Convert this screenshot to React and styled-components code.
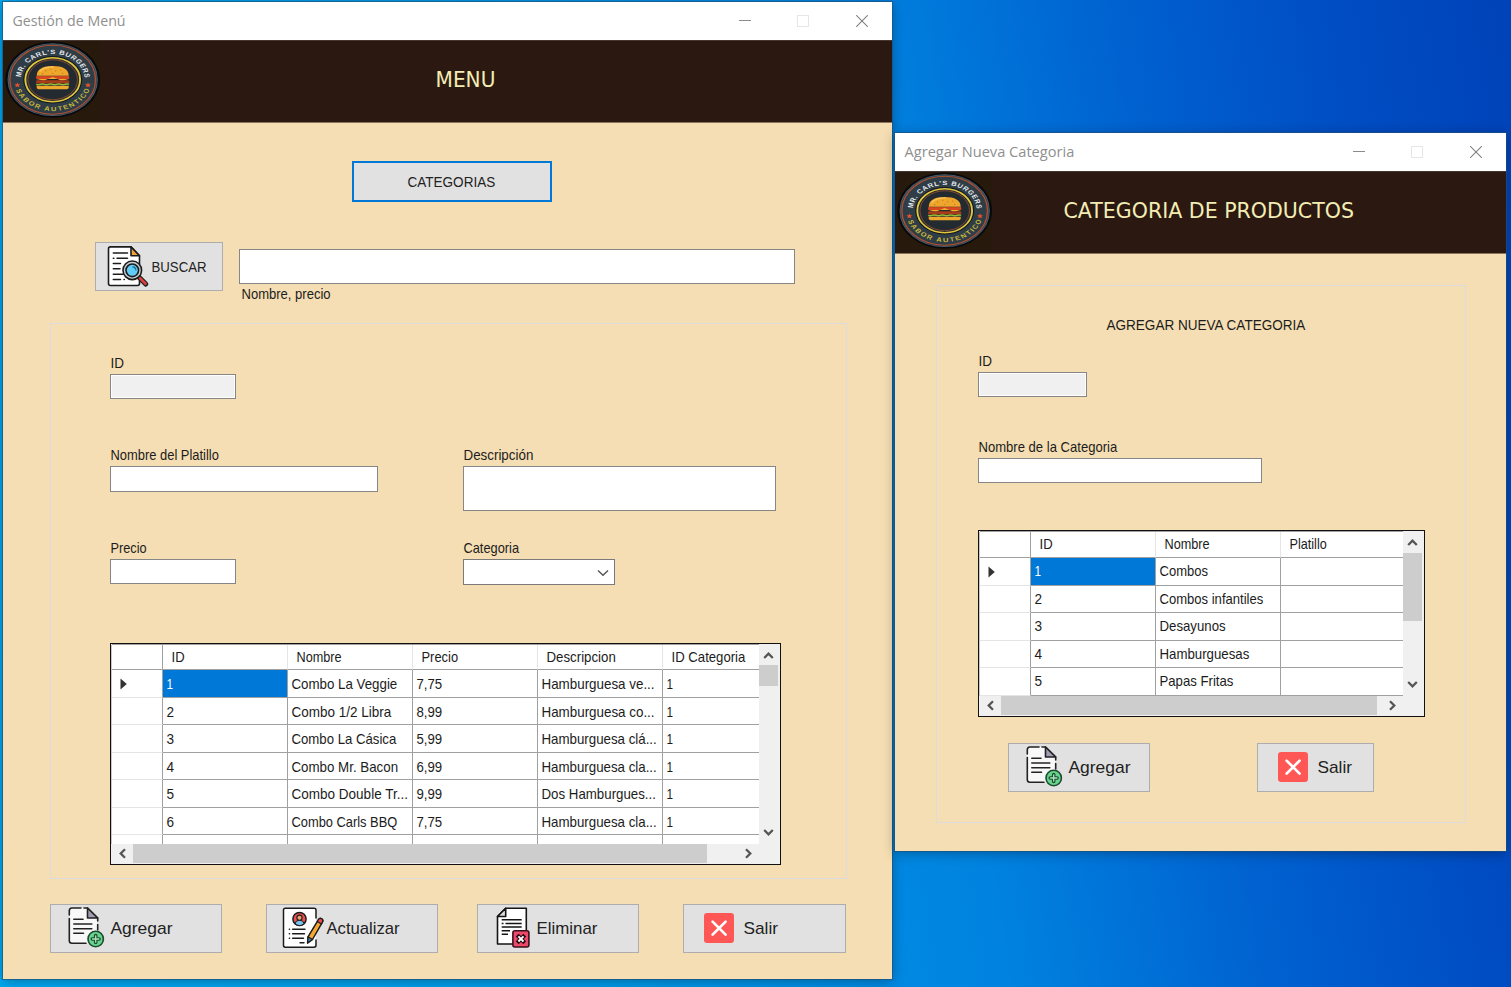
import React, { useLayoutEffect, useRef } from "react";
import styled, { createGlobalStyle } from "styled-components";

const GlobalStyle = createGlobalStyle`
  *, *::before, *::after { box-sizing: border-box; }
  html, body { margin: 0; padding: 0; overflow: hidden; }
  body { font-family: "Liberation Sans", Arial, sans-serif; font-size: 15px; color: #1c1c1c; }
  svg { display: block; flex: none; }
`;

const Desktop = styled.div`
  position: relative;
  width: 1511px;
  height: 987px;
  overflow: hidden;
  background: linear-gradient(81deg, #00a8f0 0%, #009ae8 36%, #0083e0 60%, #0062d0 76%, #004cc2 90%, #0042b8 100%);
`;

const Window = styled.section`
  position: absolute;
  left: ${(p) => p.$x}px;
  top: ${(p) => p.$y}px;
  width: ${(p) => p.$w}px;
  height: ${(p) => p.$h}px;
  background: #f5deb3;
  box-shadow: 0 0 0 1px rgba(30, 80, 120, 0.65), 0 2px 12px rgba(0, 0, 0, 0.32);
  display: flex;
  flex-direction: column;
`;

const TitleBar = styled.div`
  flex: none;
  height: 38px;
  background: #fff;
  display: flex;
  align-items: center;
  padding: 0 24px 2px 9px;
  font-family: "Open Sans", "Noto Sans", sans-serif;
  font-size: 15px;
  color: #8f8f8f;
`;

const Controls = styled.div`
  margin-left: auto;
  display: flex;
  gap: 46px;
  padding-top: 2px;
`;

const Banner = styled.header`
  flex: none;
  height: 83px;
  background: #2b1911;
  border-bottom: 1px solid #8e7259;
  border-top: 1px solid #453630;
  display: flex;
  align-items: center;
  gap: ${(p) => p.$gap}px;
  font-family: "DejaVu Sans", Verdana, sans-serif;
  font-size: 21px;
  line-height: 25px;
  color: #f3edb4;
`;

const BannerTitle = styled.div`
  padding-bottom: 2px;
`;

const TextBox = styled.span`
  display: block;
  flex: none;
  width: ${(p) => p.$w}px;
  white-space: nowrap;
`;

const TextRun = styled.span`
  display: inline-block;
  transform-origin: 0 50%;
`;

/* Condenses or widens a run of text so that it fills a box of `w` pixels, less a small bearing. */
function Fit({ w, children }) {
  const ref = useRef(null);
  useLayoutEffect(() => {
    const el = ref.current;
    el.style.transform = `translateX(0.5px) scaleX(${(w - 1.5) / el.offsetWidth})`;
  }, [w, children]);
  return (
    <TextBox $w={w}>
      <TextRun ref={ref}>{children}</TextRun>
    </TextBox>
  );
}

const Body = styled.div`
  flex: 1;
  display: flex;
  flex-direction: column;
  padding: ${(p) => p.$pad};
`;

const Button = styled.button`
  flex: none;
  width: ${(p) => p.$w}px;
  height: 49px;
  margin: 0;
  padding: 0 0 0 ${(p) => p.$pad}px;
  border: 1px solid #adadad;
  background: #e1e1e1;
  display: flex;
  align-items: center;
  gap: ${(p) => p.$gap}px;
  font-family: inherit;
  font-size: ${(p) => (p.$small ? 15 : 17)}px;
  color: #222;
`;

const CategoriesButton = styled(Button)`
  height: 41px;
  margin-left: 302px;
  padding: 0 2px 1px 0;
  border: 2px solid #0078d7;
  justify-content: center;
`;

const SearchRow = styled.div`
  display: flex;
  gap: 16px;
  height: 65px;
  margin: 40px 0 16px 45px;
`;

const SearchField = styled.div`
  padding-top: 7px;
  display: flex;
  flex-direction: column;
`;

const SearchHint = styled.div`
  padding: 1px 0 0 2px;
  line-height: 18px;
`;

const Input = styled.input`
  display: block;
  width: ${(p) => p.$w}px;
  height: ${(p) => p.$h || 25}px;
  margin: 0;
  padding: 0 4px;
  border: 1px solid #868686;
  border-radius: 0;
  outline: none;
  background: ${(p) => (p.readOnly ? "#f0f0f0" : "#fff")};
  box-shadow: inset 0 0 0 1px #fff;
`;

const TextArea = styled(Input).attrs({ as: "textarea" })`
  resize: none;
`;

const Combo = styled.div`
  width: 152px;
  height: 26px;
  border: 1px solid #7a7a7a;
  background: #fff;
  display: flex;
  align-items: center;
  justify-content: flex-end;
  padding: 1px 5px 0 0;
`;

const Group = styled.div`
  flex: none;
  width: ${(p) => p.$w}px;
  height: ${(p) => p.$h}px;
  border: 1px solid #dcdcdc;
  padding: ${(p) => p.$pad};
`;

const FieldGrid = styled.div`
  display: grid;
  grid-template-columns: 353px auto;
  grid-template-rows: 92px 93px 104px;
`;

const FieldStack = styled.div`
  display: grid;
  grid-template-rows: 35px 86px 92px;
`;

const Field = styled.label`
  grid-column: ${(p) => p.$col || "auto"};
  display: flex;
  flex-direction: column;
  gap: 2px;
  line-height: 18px;
`;

const Heading = styled.div`
  padding-left: 128px;
  line-height: 16px;
`;

const Actions = styled.div`
  display: flex;
  gap: ${(p) => p.$gap}px;
  padding: ${(p) => p.$pad};
`;

const Pair = styled.div`
  display: flex;
  gap: ${(p) => p.$gap}px;
`;

/* Data grid */

const GridFrame = styled.div`
  width: ${(p) => p.$w}px;
  height: ${(p) => p.$h}px;
  border: 1px solid #111;
  padding: 1px;
  background: #f0f0f0;
  display: grid;
  grid-template-columns: 1fr 20px;
  grid-template-rows: 1fr 19px;
  font-size: 14.5px;
`;

const GridView = styled.div`
  background: #fff;
  overflow: hidden;
  box-shadow: 0 -1px 0 #a0a0a0, -1px 0 0 #c8c8c8;
`;

const HeadRow = styled.div`
  display: flex;
  height: ${(p) => p.$h}px;
  line-height: 25px;
`;

const HeadCell = styled.div`
  flex: none;
  width: ${(p) => p.$w}px;
  padding-left: 8px;
  overflow: hidden;
  border-bottom: 1px solid #a0a0a0;
  border-right: ${(p) => (p.$last ? 0 : 1)}px solid ${(p) => (p.$corner ? "#a0a0a0" : "#e5e5e5")};
`;

const Row = styled.div`
  display: flex;
  height: 27.5px;
  line-height: ${(p) => p.$line}px;
`;

const RowHead = styled.div`
  flex: none;
  width: ${(p) => p.$w}px;
  display: flex;
  align-items: center;
  padding: 2px 0 0 8px;
  border-right: 1px solid #a0a0a0;
  border-bottom: 1px solid #e5e5e5;
`;

const Cell = styled.div`
  flex: none;
  width: ${(p) => p.$w}px;
  padding-left: 3px;
  overflow: hidden;
  border-right: ${(p) => (p.$last ? 0 : 1)}px solid #a0a0a0;
  border-bottom: 1px solid #a0a0a0;
  background: ${(p) => (p.$selected ? "#0078d7" : "#fff")};
  color: ${(p) => (p.$selected ? "#fff" : "inherit")};
`;

const ScrollY = styled.div`
  display: flex;
  flex-direction: column;
  align-items: center;
  justify-content: space-between;
  padding: 0 1px 6px 0;
`;

const ThumbY = styled.div`
  flex: none;
  width: 19px;
  height: ${(p) => p.$size}px;
  background: #cdcdcd;
  margin-bottom: auto;
`;

const ScrollX = styled.div`
  grid-column: 1 / -1;
  display: flex;
  align-items: center;
`;

const ThumbX = styled.div`
  flex: none;
  width: ${(p) => p.$size}px;
  height: 19px;
  background: #cdcdcd;
`;

const ArrowSlot = styled.div`
  flex: none;
  width: ${(p) => p.$w || 19}px;
  height: ${(p) => p.$h || 19}px;
  display: flex;
  align-items: center;
  justify-content: center;
`;

function Arrow({ dir }) {
  const turn = { up: 0, right: 90, down: 180, left: 270 }[dir];
  return (
    <svg width="11" height="11" viewBox="0 0 11 11">
      <path
        d="M1.2 8 L5.5 3.7 L9.8 8"
        transform={`rotate(${turn} 5.5 5.5)`}
        fill="none"
        stroke="#555"
        strokeWidth="2.3"
      />
    </svg>
  );
}

function DataGrid({ width, height, headWidth, headHeight, line, columns, rows, thumbY, thumbX, arrowX }) {
  const last = columns.length - 1;
  return (
    <GridFrame $w={width} $h={height}>
      <GridView>
        <HeadRow $h={headHeight}>
          <HeadCell $w={headWidth} $corner />
          {columns.map((c, i) => (
            <HeadCell key={c.name} $w={c.width} $last={i === last}>
              <Fit w={c.text}>{c.name}</Fit>
            </HeadCell>
          ))}
        </HeadRow>
        {rows.map((row, r) => (
          <Row key={r} $line={line}>
            <RowHead $w={headWidth}>
              {r === 0 && (
                <svg width="7" height="12" viewBox="0 0 7 12">
                  <path d="M0.5 0.5 L6.8 6 L0.5 11.5 Z" fill="#333" />
                </svg>
              )}
            </RowHead>
            {row.map(([text, w], i) => (
              <Cell key={i} $w={columns[i].width} $last={i === last} $selected={r === 0 && i === 0}>
                {text && <Fit w={w}>{text}</Fit>}
              </Cell>
            ))}
          </Row>
        ))}
      </GridView>
      <ScrollY>
        <ArrowSlot $h={headHeight - 5}><Arrow dir="up" /></ArrowSlot>
        <ThumbY $size={thumbY} />
        <Arrow dir="down" />
      </ScrollY>
      <ScrollX>
        <ArrowSlot $w={21}><Arrow dir="left" /></ArrowSlot>
        <ThumbX $size={thumbX} />
        <ArrowSlot $w={arrowX}><Arrow dir="right" /></ArrowSlot>
      </ScrollX>
    </GridFrame>
  );
}

/* Drawings */

function Logo({ id }) {
  return (
    <svg width="98" height="81" viewBox="0 0 98 81">
      <rect width="98" height="81" fill="#27190c" />
      <g transform="translate(49.7 38.7) scale(1 0.805)">
        <circle r="47.3" fill="#07090b" />
        <circle r="44.6" fill="#2f3d47" stroke="#4a5a66" strokeWidth="1.2" />
        <circle r="42.8" fill="none" stroke="#b4502f" strokeWidth="1.3" />
        <circle r="29.5" fill="#10161b" />
        <circle r="27.4" fill="#232b31" stroke="#e0c63c" strokeWidth="1.9" />
        <circle r="24.8" fill="none" stroke="#8f4a30" strokeWidth="1" />
        <path id={`${id}-top`} d="M-32 0 A32 32 0 0 1 32 0" fill="none" />
        <path id={`${id}-low`} d="M-39 0 A39 39 0 0 0 39 0" fill="none" />
        <g fontFamily="Liberation Sans, Arial, sans-serif" fontWeight="700" fontSize="7.6">
          <text fill="#e6e9ec">
            <textPath href={`#${id}-top`} startOffset="3" textLength="95">MR. CARL'S BURGERS</textPath>
          </text>
          <text fill="#cdb93a">
            <textPath href={`#${id}-low`} startOffset="13" textLength="97">SABOR AUTENTICO</textPath>
          </text>
        </g>
        <path d="M-35.3 3.5 l1 2 2 .2 -1.5 1.6 .4 2.2 -1.9 -1.1 -1.9 1.1 .4 -2.2 -1.5 -1.6 2 -.2z" fill="#e2512a" />
        <path d="M35.3 3.5 l1 2 2 .2 -1.5 1.6 .4 2.2 -1.9 -1.1 -1.9 1.1 .4 -2.2 -1.5 -1.6 2 -.2z" fill="#e2512a" />
        <path d="M-16 -5 C-16 -13 -10 -17 0 -17 C10 -17 16 -13 16 -5 Z" fill="#efa62c" />
        <path d="M-13 -10 C-10 -15 -5 -16 1 -16" fill="none" stroke="#f9c654" strokeWidth="1.6" />
        <g fill="#b9761a">
          <circle cx="-7" cy="-11" r=".7" /><circle cx="-2" cy="-13" r=".7" /><circle cx="3" cy="-11" r=".7" />
          <circle cx="8" cy="-12" r=".7" /><circle cx="0" cy="-8" r=".7" /><circle cx="-10" cy="-7.5" r=".7" />
          <circle cx="10" cy="-8" r=".7" />
        </g>
        <rect x="-16.5" y="-4.5" width="33" height="3.6" fill="#d9481f" />
        <path d="M-16 -1 H16 L9 1.2 L0 -3.5 L-9 1.2 Z" fill="#f0b030" />
        <rect x="-16.5" y="0.6" width="33" height="4.2" rx="1" fill="#a83c18" />
        <path d="M-16.5 5.9 q2 1 4.1 0 t4.1 0 t4.1 0 t4.1 0 t4.1 0 t4.1 0 t4.1 0 t4.1 0" fill="none" stroke="#8fc03a" strokeWidth="1.8" />
        <path d="M-16 7.5 H16 V9.5 Q16 12 13 12 H-13 Q-16 12 -16 9.5 Z" fill="#efa62c" />
      </g>
    </svg>
  );
}

function AddIcon() {
  return (
    <svg width="40" height="45" viewBox="0 0 40 45" fill="none" stroke="#222" strokeWidth="1.6" strokeLinecap="round" strokeLinejoin="round">
      <path d="M5 2 H20.5 L30.7 12 V37.3 H5 Q2.3 37.3 2.3 34.6 V4.7 Q2.3 2 5 2 Z" fill="#f8f8f8" stroke="none" />
      <path d="M2.3 9 V4.7 Q2.3 2 5 2 H14 M2.3 12.5 V34.6 Q2.3 37.3 5 37.3 H19 M17 2 H20.5 L30.7 12 V15 M30.7 18.5 V24" />
      <path d="M20.5 2 V12 H30.7 Z" fill="#a39bb0" />
      <path d="M6.8 13.3 H16 M6.8 18 H24.8 M6.8 22.7 H24.8 M6.8 27.3 H16.5" />
      <circle cx="28.7" cy="33" r="7.7" fill="#66d48b" stroke="#1d4a30" />
      <path d="M28.7 29.6 V36.4 M25.3 33 H32.1" stroke="#1d4a30" strokeWidth="3.6" />
      <path d="M28.7 29.8 V36.2 M25.5 33 H31.9" stroke="#a9e8bd" strokeWidth="1.3" />
    </svg>
  );
}

function EditIcon() {
  return (
    <svg width="44" height="45" viewBox="0 0 44 45" fill="none" stroke="#1c1c1c" strokeWidth="1.5" strokeLinecap="round" strokeLinejoin="round">
      <path d="M35 13 V4 Q35 2.2 33 2.2 H4.3 Q2.5 2.2 2.5 4 V39.3 Q2.5 41.2 4.3 41.2 H33 Q35 41.2 35 39.3 Z" fill="#fff" stroke="none" />
      <path d="M35 12 V4 Q35 2.2 33 2.2 H4.3 Q2.5 2.2 2.5 4 V39.3 Q2.5 41.2 4.3 41.2 H33 Q35 41.2 35 39.3 V34" />
      <circle cx="18.5" cy="13" r="6.6" fill="#ee4f4f" />
      <path d="M14 17.6 Q14.5 14.2 18.5 14.2 Q22.5 14.2 23 17.6 Q21 19.6 18.5 19.6 Q16 19.6 14 17.6Z" fill="#7cc4ee" strokeWidth="1" />
      <circle cx="18.5" cy="11.7" r="2.6" fill="#e9a273" strokeWidth="1.1" />
      <path d="M8.3 23.3 h.3 M11.6 23.3 H24 M8.3 27.8 h.3 M11.6 27.8 H23.5 M8.3 32.3 h.3 M11.6 32.3 H22.5 M19 36.7 H23" strokeWidth="1.4" />
      <path d="M37.3 13.8 Q38.7 11.6 40.7 12.8 Q42.7 14.2 41.3 16.3 L31.5 33.5 L26.6 37 L27 30.8 Z" fill="#f5a833" />
      <path d="M37.3 13.8 Q38.7 11.6 40.7 12.8 Q42.7 14.2 41.3 16.3 L40.3 18 L36.2 15.6 Z" fill="#ef4b4b" strokeWidth="1.2" />
      <path d="M27 30.8 L31.5 33.5 L26.6 37 Z" fill="#4b7fa5" strokeWidth="1.3" />
    </svg>
  );
}

function DeleteIcon() {
  return (
    <svg width="36" height="45" viewBox="0 0 36 45" fill="none" stroke="#151515" strokeWidth="1.6" strokeLinejoin="round">
      <path d="M10.7 2.2 H31.3 V38 H2.5 V10.5 Z" fill="#fff" />
      <path d="M10.7 2.2 V10.5 H2.5 Z" fill="#ddd" />
      <path d="M6.7 13.7 H26.7 M6.7 17.4 H8.5 M10.5 17.4 H26.7 M6.7 21 H26.7 M6.7 24.7 H15 M6.7 28.3 H13" strokeWidth="1.5" />
      <rect x="17.9" y="24.8" width="16" height="16.2" rx="2" fill="#ec4a6b" stroke="#3a0f1b" />
      <path d="M23.6 30.5 L28.3 35.3 M28.3 30.5 L23.6 35.3" stroke="#24080f" strokeWidth="4" strokeLinecap="square" />
      <path d="M23.4 30.3 L28.5 35.5 M28.5 30.3 L23.4 35.5" stroke="#fff" strokeWidth="1.9" />
    </svg>
  );
}

function ExitIcon() {
  return (
    <svg width="30" height="32" viewBox="0 0 30 32">
      <rect width="30" height="30" rx="3.2" fill="#ff5656" />
      <path d="M8.6 8.6 L21.6 21.6 M21.6 8.6 L8.6 21.6" stroke="#fff" strokeWidth="2.7" strokeLinecap="round" />
    </svg>
  );
}

function SearchIcon() {
  return (
    <svg width="43" height="43" viewBox="0 0 43 43" fill="none" stroke="#1c1c1c" strokeWidth="1.6" strokeLinecap="round" strokeLinejoin="round">
      <path d="M4.5 1.9 H25 L33.5 10.7 V38.5 Q33.5 40.5 31.5 40.5 H4.5 Q2.5 40.5 2.5 38.5 V3.9 Q2.5 1.9 4.5 1.9 Z" fill="#fff" />
      <path d="M25 1.9 V10.7 H33.5 Z" fill="#f0a23c" />
      <path d="M7.3 8 H21.5 M7.3 13.2 h.6 M11 13.2 H21.5 M7.3 18.6 H14.5 M7.3 23.7 H14 M7.3 29.2 H18 M7.3 34.6 H14.5 M18 34.6 h.4" strokeWidth="1.5" />
      <path d="M33.3 32.5 L39.7 39" stroke="#1c1c1c" strokeWidth="5" />
      <path d="M33.8 33 L39.5 38.8" stroke="#d9423c" strokeWidth="2.7" />
      <circle cx="26.3" cy="25.3" r="9.3" fill="#c9ced3" />
      <circle cx="26.3" cy="25.3" r="6.3" fill="#5fcdf7" />
      <path d="M26.8 21.8 Q29.6 22 29.8 24.8" stroke="#1c6a90" strokeWidth="1.2" />
    </svg>
  );
}

function WindowControls() {
  return (
    <Controls>
      <svg width="12" height="12" viewBox="0 0 12 12"><path d="M0 5.5 H12" stroke="#8a8a8a" /></svg>
      <svg width="12" height="12" viewBox="0 0 12 12"><rect x=".5" y=".5" width="11" height="11" fill="none" stroke="#e6e6e6" /></svg>
      <svg width="13" height="12" viewBox="-1 0 13 12"><path d="M.2 .2 L11.8 11.8 M11.8 .2 L.2 11.8" stroke="#808080" strokeWidth="1.1" /></svg>
    </Controls>
  );
}

/* Data */

const menuColumns = [
  { name: "ID", width: 125, text: 15 },
  { name: "Nombre", width: 125, text: 47 },
  { name: "Precio", width: 125, text: 38 },
  { name: "Descripcion", width: 125, text: 71 },
  { name: "ID Categoria", width: 96, text: 75 },
];

const menuRows = [
  [["1", 8], ["Combo La Veggie", 107], ["7,75", 27], ["Hamburguesa ve...", 115], ["1", 8]],
  [["2", 9], ["Combo 1/2 Libra", 101], ["8,99", 27], ["Hamburguesa co...", 115], ["1", 8]],
  [["3", 9], ["Combo La Cásica", 106], ["5,99", 27], ["Hamburguesa clá...", 117], ["1", 8]],
  [["4", 9], ["Combo Mr. Bacon", 108], ["6,99", 27], ["Hamburguesa cla...", 117], ["1", 8]],
  [["5", 9], ["Combo Double Tr...", 118], ["9,99", 27], ["Dos Hamburgues...", 116], ["1", 8]],
  [["6", 9], ["Combo Carls BBQ", 107], ["7,75", 27], ["Hamburguesa cla...", 117], ["1", 8]],
  [[""], [""], [""], [""], [""]],
];

const categoryColumns = [
  { name: "ID", width: 125, text: 15 },
  { name: "Nombre", width: 125, text: 47 },
  { name: "Platillo", width: 122, text: 39 },
];

const categoryRows = [
  [["1", 8], ["Combos", 50], [""]],
  [["2", 9], ["Combos infantiles", 105], [""]],
  [["3", 9], ["Desayunos", 68], [""]],
  [["4", 9], ["Hamburguesas", 91], [""]],
  [["5", 9], ["Papas Fritas", 75], [""]],
];

export default function App() {
  return (
    <Desktop>
      <GlobalStyle />

      <Window $x={3} $y={2} $w={889} $h={977}>
        <TitleBar>
          <Fit w={115}>Gestión de Menú</Fit>
          <WindowControls />
        </TitleBar>
        <Banner $gap={334}>
          <Logo id="menu-logo" />
          <BannerTitle><Fit w={61}>MENU</Fit></BannerTitle>
        </Banner>
        <Body $pad="38px 0 0 47px">
          <CategoriesButton $w={200} $small>
            <Fit w={89}>CATEGORIAS</Fit>
          </CategoriesButton>
          <SearchRow>
            <Button $w={128} $pad={10} $gap={2} $small>
              <SearchIcon />
              <Fit w={57}>BUSCAR</Fit>
            </Button>
            <SearchField>
              <Input $w={556} $h={35} />
              <SearchHint><Fit w={91}>Nombre, precio</Fit></SearchHint>
            </SearchField>
          </SearchRow>
          <Group $w={797} $h={556} $pad="30px 0 0 59px">
            <FieldGrid>
              <Field $col="1 / -1">
                <Fit w={15}>ID</Fit>
                <Input $w={126} readOnly />
              </Field>
              <Field>
                <Fit w={110}>Nombre del Platillo</Fit>
                <Input $w={268} $h={26} />
              </Field>
              <Field>
                <Fit w={71}>Descripción</Fit>
                <TextArea $w={313} $h={45} />
              </Field>
              <Field>
                <Fit w={38}>Precio</Fit>
                <Input $w={126} />
              </Field>
              <Field>
                <Fit w={57}>Categoria</Fit>
                <Combo>
                  <svg width="12" height="8" viewBox="0 0 12 8">
                    <path d="M1 1.5 L6 6.3 L11 1.5" fill="none" stroke="#555" strokeWidth="1.4" />
                  </svg>
                </Combo>
              </Field>
            </FieldGrid>
            <DataGrid
              width={671}
              height={222}
              headWidth={51}
              headHeight={25}
              line={28}
              columns={menuColumns}
              rows={menuRows}
              thumbY={21}
              thumbX={574}
              arrowX={82}
            />
          </Group>
          <Actions $gap={44} $pad="25px 0 0">
            <Button $w={172} $pad={16} $gap={2}>
              <AddIcon />
              <Fit w={63}>Agregar</Fit>
            </Button>
            <Pair $gap={39}>
              <Button $w={172} $pad={14} $gap={1}>
                <EditIcon />
                <Fit w={75}>Actualizar</Fit>
              </Button>
              <Button $w={162} $pad={17} $gap={5}>
                <DeleteIcon />
                <Fit w={62}>Eliminar</Fit>
              </Button>
            </Pair>
            <Button $w={163} $pad={20} $gap={8}>
              <ExitIcon />
              <Fit w={36}>Salir</Fit>
            </Button>
          </Actions>
        </Body>
      </Window>

      <Window $x={895} $y={133} $w={611} $h={718}>
        <TitleBar>
          <Fit w={171}>Agregar Nueva Categoria</Fit>
          <WindowControls />
        </TitleBar>
        <Banner $gap={70}>
          <Logo id="category-logo" />
          <BannerTitle><Fit w={292}>CATEGORIA DE PRODUCTOS</Fit></BannerTitle>
        </Banner>
        <Body $pad="31px 0 0 41px">
          <Group $w={530} $h={538} $pad="31px 0 0 41px">
            <FieldStack>
              <Heading><Fit w={200}>AGREGAR NUEVA CATEGORIA</Fit></Heading>
              <Field>
                <Fit w={15}>ID</Fit>
                <Input $w={109} readOnly />
              </Field>
              <Field>
                <Fit w={140}>Nombre de la Categoria</Fit>
                <Input $w={284} />
              </Field>
            </FieldStack>
            <DataGrid
              width={447}
              height={187}
              headWidth={51}
              headHeight={26}
              line={27}
              columns={categoryColumns}
              rows={categoryRows}
              thumbY={68}
              thumbX={376}
              arrowX={31}
            />
            <Actions $gap={107} $pad="26px 0 0 30px">
              <Button $w={142} $pad={16} $gap={2}>
                <AddIcon />
                <Fit w={63}>Agregar</Fit>
              </Button>
              <Button $w={117} $pad={20} $gap={8}>
                <ExitIcon />
                <Fit w={36}>Salir</Fit>
              </Button>
            </Actions>
          </Group>
        </Body>
      </Window>
    </Desktop>
  );
}
